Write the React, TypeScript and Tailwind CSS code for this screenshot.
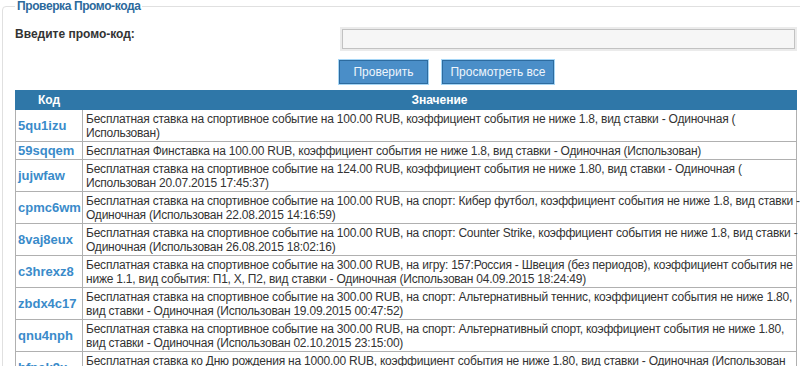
const rows: { code: string; lines: string[] }[] = [
  {
    code: '5qu1izu',
    lines: [
      'Бесплатная ставка на спортивное событие на 100.00 RUB, коэффициент события не ниже 1.8, вид ставки - Одиночная (',
      'Использован)',
    ],
  },
  {
    code: '59sqqem',
    lines: ['Бесплатная Финставка на 100.00 RUB, коэффициент события не ниже 1.8, вид ставки - Одиночная (Использован)'],
  },
  {
    code: 'jujwfaw',
    lines: [
      'Бесплатная ставка на спортивное событие на 124.00 RUB, коэффициент события не ниже 1.80, вид ставки - Одиночная (',
      'Использован 20.07.2015 17:45:37)',
    ],
  },
  {
    code: 'cpmc6wm',
    lines: [
      'Бесплатная ставка на спортивное событие на 100.00 RUB, на спорт: Кибер футбол, коэффициент события не ниже 1.8, вид ставки -',
      'Одиночная (Использован 22.08.2015 14:16:59)',
    ],
  },
  {
    code: '8vaj8eux',
    lines: [
      'Бесплатная ставка на спортивное событие на 100.00 RUB, на спорт: Counter Strike, коэффициент события не ниже 1.8, вид ставки -',
      'Одиночная (Использован 26.08.2015 18:02:16)',
    ],
  },
  {
    code: 'c3hrexz8',
    lines: [
      'Бесплатная ставка на спортивное событие на 300.00 RUB, на игру: 157:Россия - Швеция (без периодов), коэффициент события не',
      'ниже 1.1, вид события: П1, Х, П2, вид ставки - Одиночная (Использован 04.09.2015 18:24:49)',
    ],
  },
  {
    code: 'zbdx4c17',
    lines: [
      'Бесплатная ставка на спортивное событие на 300.00 RUB, на спорт: Альтернативный теннис, коэффициент события не ниже 1.80,',
      'вид ставки - Одиночная (Использован 19.09.2015 00:47:52)',
    ],
  },
  {
    code: 'qnu4nph',
    lines: [
      'Бесплатная ставка на спортивное событие на 300.00 RUB, на спорт: Альтернативный спорт, коэффициент события не ниже 1.80,',
      'вид ставки - Одиночная (Использован 02.10.2015 23:15:00)',
    ],
  },
  {
    code: 'hfnak9x',
    lines: [
      'Бесплатная ставка ко Дню рождения на 1000.00 RUB, коэффициент события не ниже 1.80, вид ставки - Одиночная (Использован',
      '14.10.2015 12:30:11)',
    ],
  },
]

function PromoButton({ label, width }: { label: string; width: string }) {
  return (
    <button
      type="button"
      className={`${width} h-[24px] border border-[#2d6b9f] bg-[#4a8ec8] text-[12px] text-[#eef5fc] shadow-[0_0_0_1px_#a6d6f6]`}
    >
      {label}
    </button>
  )
}

export default function App() {
  return (
    <div className="w-[800px] h-[366px] overflow-hidden bg-white font-['Liberation_Sans',Arial,sans-serif] text-[12px] text-[#333]">
      <fieldset className="ml-[2px] w-[820px] rounded-[4px] border border-[#e0e0e0] pl-[12px] pb-4">
        <legend className="px-[2px] font-bold leading-[13px] tracking-[-0.4px] text-[#2c6a9c]">Проверка Промо-кода</legend>

        <div className="w-[782px]">
          <div className="mt-[14px] flex">
            <div className="w-[323px] font-bold leading-[14px]">Введите промо-код:</div>
            <div className="flex-1">
              <div className="ml-[2px] bg-[#ebebeb] p-[2px]">
                <input className="block h-[20px] w-full border border-[#c2c2c2] bg-[#f6f6f6] outline-none" />
              </div>
              <div className="ml-[1px] mt-[9px] flex gap-[14px]">
                <PromoButton label="Проверить" width="w-[89px]" />
                <PromoButton label="Просмотреть все" width="w-[112px]" />
              </div>
            </div>
          </div>

          <table className="mt-[6px] w-[782px] table-fixed border-collapse">
            <colgroup>
              <col className="w-[67px]" />
              <col />
            </colgroup>
            <thead>
              <tr className="bg-[#2f77a8] text-white">
                <th className="h-[19px] border border-[#2f77a8] font-bold leading-[14px]">Код</th>
                <th className="h-[19px] border border-[#2f77a8] font-bold leading-[14px]">Значение</th>
              </tr>
            </thead>
            <tbody>
              {rows.map((row) => (
                <tr key={row.code}>
                  <td className="border border-[#b0b0b0] pl-[2px] align-middle text-[13px] font-bold leading-[14px] text-[#3a8bca] whitespace-nowrap">
                    {row.code}
                  </td>
                  <td className="border border-[#b0b0b0] pl-[3px] pr-0 pt-[2px] pb-px leading-[14px] tracking-[-0.22px]">
                    {row.lines.map((line) => (
                      <div key={line} className="whitespace-nowrap">
                        {line}
                      </div>
                    ))}
                  </td>
                </tr>
              ))}
            </tbody>
          </table>
        </div>
      </fieldset>
    </div>
  )
}
